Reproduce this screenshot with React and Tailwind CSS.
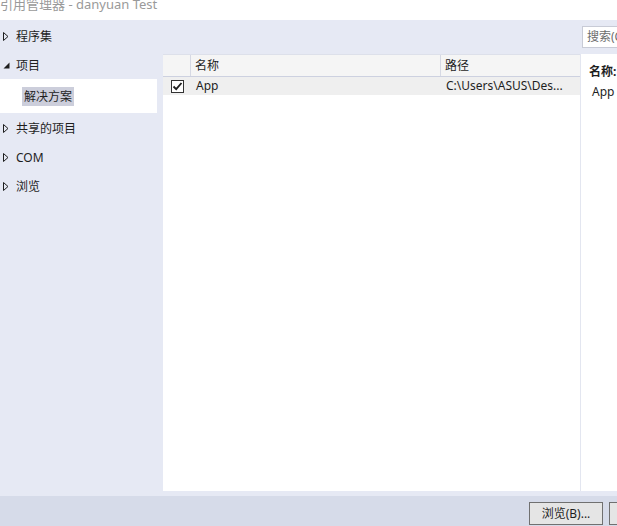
import React from 'react';

const font = { fontFamily: '"Noto Sans", "Noto Sans CJK SC", sans-serif' };

function Caret({ open }) {
    if (open) {
        return (
            <svg width="7" height="7" viewBox="0 0 7 7" className="shrink-0">
                <path d="M6.5 0.5 L6.5 6.5 L0.5 6.5 Z" fill="#1e1e1e" />
            </svg>
        );
    }
    return (
        <svg width="6" height="9" viewBox="0 0 6 9" className="shrink-0">
            <path d="M0.5 0.5 L5 4.5 L0.5 8.5 Z" fill="none" stroke="#1e1e1e" strokeWidth="1" />
        </svg>
    );
}

function NavItem({ label, open }) {
    return (
        <div className="h-[29px] flex items-center pt-[2px]">
            <div className="w-[16px] pl-[3px] flex items-center">
                <Caret open={open} />
            </div>
            <span className="text-[12px] text-[#1e1e1e]">{label}</span>
        </div>
    );
}

function CheckBox() {
    return (
        <svg width="13" height="13" viewBox="0 0 13 13">
            <rect x="0.5" y="0.5" width="12" height="12" fill="#fff" stroke="#333" />
            <path d="M2.5 6.5 L5.2 9.2 L10.5 3" fill="none" stroke="#1e1e1e" strokeWidth="1.8" />
        </svg>
    );
}

export default function App() {
    return (
        <div className="w-[617px] h-[526px] flex flex-col overflow-hidden bg-[#e6e9f4]" style={font}>
            {/* title */}
            <div className="h-[20px] bg-white overflow-hidden">
                <div className="-mt-[5px] text-[13px] leading-[18px] text-[#9a9a9a] whitespace-nowrap">
                    引用管理器 - danyuan Test
                </div>
            </div>

            <div className="flex-1 flex min-h-0">
                {/* left nav */}
                <div className="w-[163px] shrink-0 pt-[1px]">
                    <NavItem label="程序集" />
                    <NavItem label="项目" open />
                    <div className="w-[157px] h-[34px] bg-white flex items-center pl-[22px] pt-[1px]">
                        <span className="h-[19px] px-[2px] flex items-center bg-[#cccedb] text-[12px] text-[#1e1e1e]">解决方案</span>
                    </div>
                    <NavItem label="共享的项目" />
                    <NavItem label="COM" />
                    <NavItem label="浏览" />
                </div>

                {/* content */}
                <div className="flex-1 min-w-0 flex flex-col pb-[5px]">
                    <div className="h-[34px] shrink-0 flex items-start pt-[6px] pl-[419px]">
                        <div className="w-[150px] h-[22px] shrink-0 bg-white border border-[#c8cbd6] flex items-center pl-[4px] text-[12px] text-[#6d6d6d]">
                            搜索(Ctrl+E)
                        </div>
                    </div>
                    <div className="flex-1 flex min-h-0">
                        <div className="w-[417px] shrink-0 bg-white flex flex-col">
                            <div className="h-[23px] flex bg-[#f5f5f5] border-t border-[#dde0ea] border-b border-b-[#cdd1e0] text-[12px] text-[#1e1e1e]">
                                <div className="w-[28px] border-r border-[#d6d9e4]" />
                                <div className="w-[250px] border-r border-[#d6d9e4] flex items-center pl-[4px]">名称</div>
                                <div className="flex-1 flex items-center pl-[4px]">路径</div>
                            </div>
                            <div className="h-[18px] flex items-center bg-[#efefef] text-[12px] text-[#1e1e1e]">
                                <div className="w-[28px] flex items-center pl-[8px]">
                                    <CheckBox />
                                </div>
                                <div className="w-[250px] pl-[5px]">App</div>
                                <div className="flex-1 pl-[5px] whitespace-nowrap">C:\Users\ASUS\Des...</div>
                            </div>
                        </div>
                        <div className="w-px bg-[#e3e6f0]" />
                        <div className="flex-1 bg-white pt-[9px] pl-[8px] text-[12px] text-[#1e1e1e] whitespace-nowrap">
                            <div className="font-bold">名称:</div>
                            <div className="pl-[3px] mt-[2px]">App</div>
                        </div>
                    </div>
                </div>
            </div>

            {/* bottom bar */}
            <div className="h-[30px] shrink-0 bg-[#d6dbe9] flex items-start pt-[6px] pl-[529px] gap-[6px]">
                <button className="w-[74px] h-[23px] shrink-0 bg-[#e5e5e5] border border-[#707070] text-[12px] text-[#1e1e1e] flex items-center justify-center">
                    浏览(B)...
                </button>
                <button className="w-[74px] h-[23px] shrink-0 bg-[#e5e5e5] border border-[#707070] text-[12px] text-[#1e1e1e]">
                    确定
                </button>
            </div>
        </div>
    );
}
